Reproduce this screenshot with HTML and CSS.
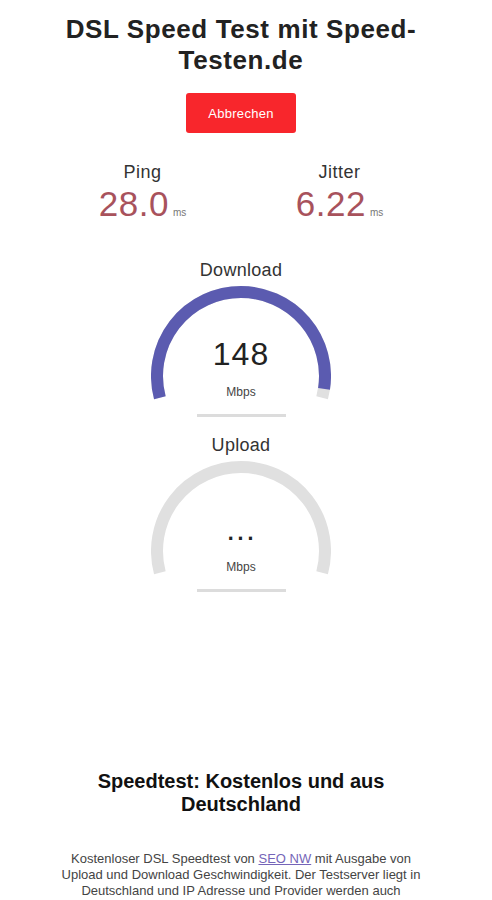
FILE: index.html
```html
<!DOCTYPE html>
<html lang="de">

<head>
    <meta charset="UTF-8">
    <meta name="viewport" content="width=device-width, initial-scale=1.0">
    <title>DSL Speed Test</title>
    <link rel="stylesheet" href="styles.css">
</head>

<body>
    <div class="seite">
        <h1 class="titel">DSL Speed Test mit Speed-Testen.de</h1>

        <button class="knopf">Abbrechen</button>

        <div class="werte">
            <div class="wert">
                <div class="wertName">Ping</div>
                <div class="wertZahl">28.0<span class="einheit">ms</span></div>
            </div>
            <div class="wert">
                <div class="wertName">Jitter</div>
                <div class="wertZahl">6.22<span class="einheit">ms</span></div>
            </div>
        </div>

        <!-- Download -->
        <div class="messung">
            <div class="messName">Download</div>
            <div class="tacho">
                <svg class="bogen" width="180" height="120" viewBox="0 0 180 120">
                    <path d="M 8.86 111.74 A 84 84 0 1 1 171.14 111.74" fill="none" stroke="#e0e0e0" stroke-width="12"/>
                    <path d="M 8.86 111.74 A 84 84 0 1 1 171.14 111.74" fill="none" stroke="#5b5bb0" stroke-width="12"
                        pathLength="100" stroke-dasharray="97 100"/>
                </svg>
                <div class="anzeige">
                    <div class="zahl">148</div>
                    <div class="mbps">Mbps</div>
                </div>
            </div>
            <div class="strich"></div>
        </div>

        <!-- Upload -->
        <div class="messung oben">
            <div class="messName">Upload</div>
            <div class="tacho">
                <svg class="bogen" width="180" height="120" viewBox="0 0 180 120">
                    <path d="M 8.86 111.74 A 84 84 0 1 1 171.14 111.74" fill="none" stroke="#e0e0e0" stroke-width="12"/>
                </svg>
                <div class="anzeige">
                    <div class="zahl">...</div>
                    <div class="mbps">Mbps</div>
                </div>
            </div>
            <div class="strich"></div>
        </div>

        <h2 class="unterTitel">Speedtest: Kostenlos und aus Deutschland</h2>

        <p class="text">
            Kostenloser DSL Speedtest von <a href="#">SEO NW</a> mit Ausgabe von
            Upload und Download Geschwindigkeit. Der Testserver liegt in
            Deutschland und IP Adresse und Provider werden auch
        </p>
    </div>
</body>

</html>
```

FILE: styles.css
```css
body {
    margin: 0;
    background-color: white;
    font-family: "Liberation Sans", Arial, sans-serif;
    color: #222;
}

.seite {
    width: 482px;
    display: flex;
    flex-direction: column;
    align-items: center;
    text-align: center;
}

.titel {
    width: 440px;
    margin: 14px 0 0 0;
    font-size: 26px;
    line-height: 31px;
    letter-spacing: 0.6px;
    font-weight: bold;
    color: #222;
}

.knopf {
    margin-top: 17px;
    width: 110px;
    height: 40px;
    border: none;
    border-radius: 3px;
    background-color: #f8262c;
    color: white;
    font-family: "Liberation Sans", Arial, sans-serif;
    font-size: 13px;
    letter-spacing: 0.3px;
}

.werte {
    display: flex;
    justify-content: center;
    margin-top: 29px;
}

.wert {
    width: 197px;
}

.wertName {
    font-size: 18px;
    line-height: 20px;
    letter-spacing: 0.5px;
    color: #333;
}

.wertZahl {
    margin-top: 4px;
    font-size: 35px;
    line-height: 36px;
    letter-spacing: 0.5px;
    color: #a8525c;
}

.einheit {
    margin-left: 4px;
    font-size: 10px;
    line-height: 10px;
    letter-spacing: 0;
    color: #777;
}

.messung {
    display: flex;
    flex-direction: column;
    align-items: center;
    margin-top: 38px;
}

.messung.oben {
    margin-top: 18px;
}

.messName {
    font-size: 18px;
    line-height: 20px;
    letter-spacing: 0.3px;
    color: #333;
}

.tacho {
    display: grid;
    margin-top: 6px;
}

.bogen,
.anzeige {
    grid-area: 1 / 1;
}

.bogen {
    display: block;
}

.anzeige {
    padding-top: 51px;
}

.zahl {
    font-size: 32px;
    line-height: 34px;
    letter-spacing: 1px;
    color: #222;
}

.mbps {
    margin-top: 14px;
    font-size: 12px;
    line-height: 14px;
    color: #444;
}

.strich {
    width: 89px;
    height: 3px;
    margin-top: 8px;
    background-color: #dcdcdc;
}

.unterTitel {
    width: 340px;
    margin: 178px 0 0 0;
    font-size: 20px;
    line-height: 23px;
    font-weight: bold;
    color: #111;
}

.text {
    width: 375px;
    margin: 35px 0 0 0;
    font-size: 13px;
    line-height: 16px;
    color: #444;
}

.text a {
    color: #7565b8;
}
```
